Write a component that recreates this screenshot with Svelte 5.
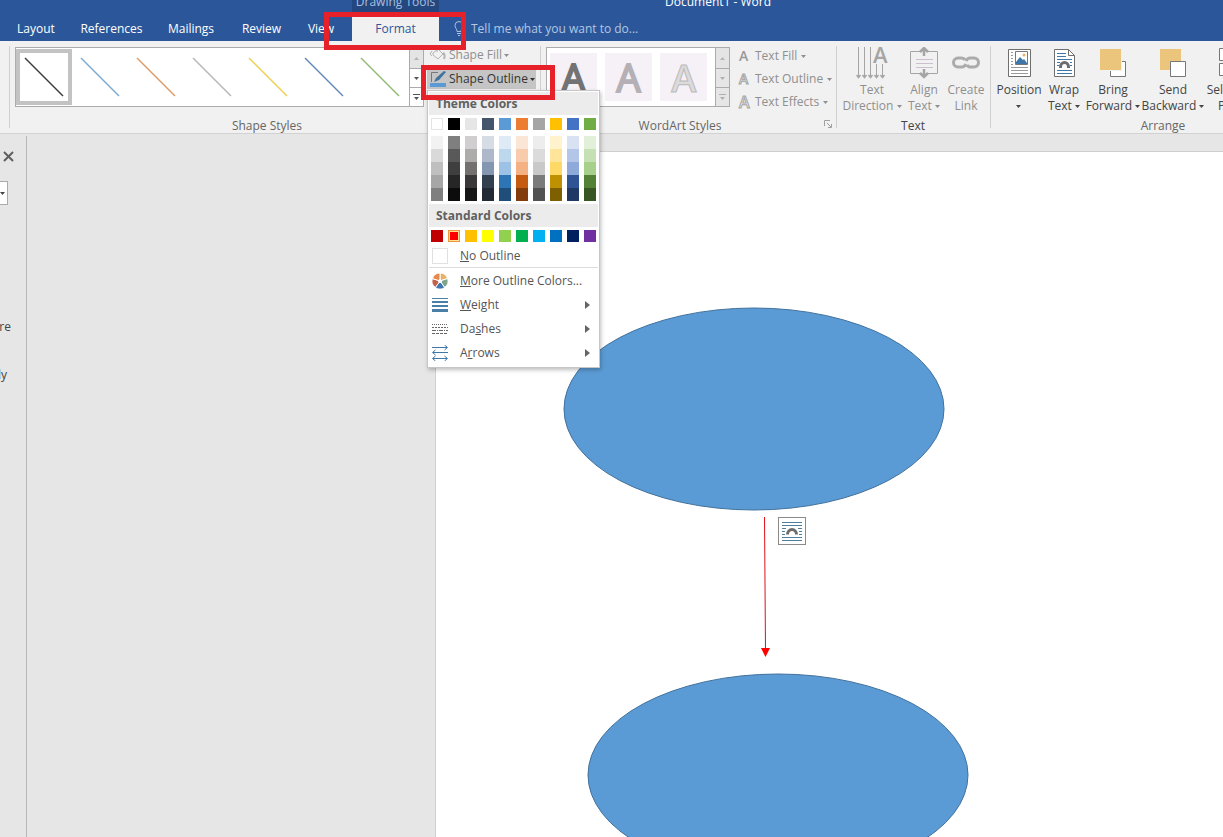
<script lang="ts">
  interface Palette {
    name: string;
    base: string;
    tints: string[];
  }

  const tabs = ['Layout', 'References', 'Mailings', 'Review', 'View'];

  const lineStyles = ['#3b3b3b', '#7ba9cf', '#dc9a66', '#b5b5b5', '#ecd04e', '#6288b5', '#8fbb74'];

  const theme: Palette[] = [
    { name: 'White', base: '#ffffff', tints: ['#f2f2f2', '#d9d9d9', '#bfbfbf', '#a6a6a6', '#7f7f7f'] },
    { name: 'Black', base: '#000000', tints: ['#7f7f7f', '#595959', '#3f3f3f', '#262626', '#0c0c0c'] },
    { name: 'Gray', base: '#e7e6e6', tints: ['#d0cece', '#aeabab', '#757070', '#3a3838', '#171616'] },
    { name: 'Blue-Gray', base: '#44546a', tints: ['#d6dce4', '#adb9ca', '#8496b0', '#323f4f', '#222a35'] },
    { name: 'Blue', base: '#5b9bd5', tints: ['#deebf6', '#bdd7ee', '#9cc3e5', '#2e75b5', '#1e4e79'] },
    { name: 'Orange', base: '#ed7d31', tints: ['#fbe5d5', '#f7cbac', '#f4b183', '#c55a11', '#833c0b'] },
    { name: 'Light Gray', base: '#a5a5a5', tints: ['#ededed', '#dbdbdb', '#c9c9c9', '#7b7b7b', '#525252'] },
    { name: 'Gold', base: '#ffc000', tints: ['#fff2cc', '#fee599', '#ffd965', '#bf9000', '#7f6000'] },
    { name: 'Royal Blue', base: '#4472c4', tints: ['#d9e2f3', '#b4c6e7', '#8eaadb', '#2f5496', '#1f3864'] },
    { name: 'Green', base: '#70ad47', tints: ['#e2efd9', '#c5e0b3', '#a8d08d', '#538135', '#375623'] },
  ];

  const standard = [
    '#c00000', '#ff0000', '#ffc000', '#ffff00', '#92d050',
    '#00b050', '#00b0f0', '#0070c0', '#002060', '#7030a0',
  ];

  let selectedColor = $state('#ff0000');
  let selectedLine = $state(0);
</script>

{#snippet caret()}
  <svg class="caret" viewBox="0 0 5 3" width="5" height="3" aria-hidden="true"><path d="M0 0h5L2.5 3z" fill="currentColor" /></svg>
{/snippet}

{#snippet scroller(off: boolean)}
  <div class="scroller" class:off>
    <button class="dim" aria-label="Scroll up"><svg width="5" height="3" viewBox="0 0 5 3"><path d="M0 3h5L2.5 0z" fill="currentColor" /></svg></button>
    <button aria-label="Scroll down">{@render caret()}</button>
    <button aria-label="More styles"><svg width="7" height="6" viewBox="0 0 7 6"><path d="M0 0h7v1H0zM1 3h5L3.5 6z" fill="currentColor" /></svg></button>
  </div>
{/snippet}

{#snippet wrapIcon()}
  <path d="M0 1.5h20M0 4.5h20M0 16.5h20M0 19.5h20M0 7.5h4M0 10.5h3M0 13.5h3M16 7.5h4M17 10.5h3M17 13.5h3" stroke="#4f7f9f" />
  <path d="M5.500 13.500a4.500 5 0 0 1 9 0" fill="none" stroke="#6d6d6d" stroke-width="3" />
{/snippet}

<div class="app">
  <header>
    <div class="context">Drawing Tools</div>
    <div class="doc-title">Document1 - Word</div>
    {#each tabs as tab, i}
      <button class="tab" style="grid-column: {i + 2}">{tab}</button>
    {/each}
    <button class="tab active">Format</button>
    <label class="tell">
      <svg width="10" height="15" viewBox="0 0 10 15" fill="none" stroke="#a9bfdf">
        <path d="M3 10.500C3 8 1 7 1 4.500a4 4 0 0 1 8 0C9 7 7 8 7 10.500zM3 12.500h4M4 14.500h2" />
      </svg>
      <input type="text" placeholder="Tell me what you want to do..." aria-label="Tell me what you want to do" />
    </label>
  </header>

  <section class="ribbon" aria-label="Format ribbon">
    <div class="group shape-styles">
      <div class="tools">
        <div class="gallery">
          {#each lineStyles as color, i}
            <button class="line-style" class:selected={selectedLine === i} aria-label="Line style {i + 1}" onclick={() => (selectedLine = i)}>
              <svg width="40" height="40" viewBox="0 0 40 40"><path d="M1 1l38 38" stroke={color} stroke-width="1.500" /></svg>
            </button>
          {/each}
          {@render scroller(false)}
        </div>
        <div class="options">
          <button class="option off">
            <svg width="18" height="16" viewBox="0 0 18 16" fill="none" stroke="#b4b4b4">
              <path d="M4 6l5-4 5 5-5 5-5-4zM8 5V1" /><path d="M14 6c2 1 2 3 1 6" stroke-width="2" /><path d="M3 4L1 7l2 2" />
            </svg>
            Shape Fill {@render caret()}
          </button>
          <div class="dropdown">
            <button class="option open" aria-expanded="true">
              <svg width="18" height="18" viewBox="0 0 18 18">
                <path d="M9 2.500H2.500V12" fill="none" stroke="#777" />
                <path d="M5 12l2-4 8-7 2 1-7 8z" fill="#41719c" />
                <path d="M1 13h16v4H1z" fill="#5b9bd5" />
              </svg>
              Shape Outline {@render caret()}
            </button>
            <div class="menu">
              <h3>Theme Colors</h3>
              <div class="swatches theme">
                {#each theme as color}
                  <button class="swatch" class:pale={color.base === '#ffffff'} aria-label={color.name} style="background: {color.base}"></button>
                {/each}
              </div>
              <div class="swatches tints">
                {#each theme as color}
                  <div class="tint-column">
                    {#each color.tints as tint, i}
                      <button class="tint" aria-label="{color.name} shade {i + 1}" style="background: {tint}"></button>
                    {/each}
                  </div>
                {/each}
              </div>
              <h3>Standard Colors</h3>
              <div class="swatches standard">
                {#each standard as color}
                  <button class="swatch" class:picked={selectedColor === color} aria-label={color} style="background: {color}" onclick={() => (selectedColor = color)}></button>
                {/each}
              </div>
              <button class="item none"><span class="empty"></span><span><u>N</u>o Outline</span></button>
              <button class="item">
                <svg width="16" height="16" viewBox="0 0 16 16" stroke="#fff">
                  <path d="M8 8L8 0A8 8 0 0 1 15.600 5.500z" fill="#e8b06a" />
                  <path d="M8 8L15.600 5.500A8 8 0 0 1 12.700 14.500z" fill="#7fa48b" />
                  <path d="M8 8L12.700 14.500A8 8 0 0 1 3.300 14.500z" fill="#3f78b0" />
                  <path d="M8 8L3.300 14.500A8 8 0 0 1 .4 5.500z" fill="#c4604a" />
                  <path d="M8 8L.4 5.500A8 8 0 0 1 8 0z" fill="#e58a4c" />
                  <circle cx="8" cy="8" r="1.500" fill="#fff" />
                </svg>
                <span><u>M</u>ore Outline Colors...</span>
              </button>
              <button class="item">
                <svg width="16" height="16" viewBox="0 0 16 16"><path d="M0 1h16v1H0zM0 4h16v2H0zM0 8h16v2H0zM0 12h16v3H0z" fill="#4a80a8" /></svg>
                <span><u>W</u>eight</span>
                <svg class="more" width="5" height="8" viewBox="0 0 5 8"><path d="M0 0l5 4-5 4z" fill="#666" /></svg>
              </button>
              <button class="item">
                <svg width="16" height="16" viewBox="0 0 16 16" stroke="#666">
                  <path d="M0 3.500h16" stroke-dasharray="1 1" /><path d="M0 6.500h16" stroke-dasharray="2 1" />
                  <path d="M0 9.500h16" stroke-dasharray="4 1 1 1" /><path d="M0 12.500h16" stroke-dasharray="3 1" />
                </svg>
                <span>Da<u>s</u>hes</span>
                <svg class="more" width="5" height="8" viewBox="0 0 5 8"><path d="M0 0l5 4-5 4z" fill="#666" /></svg>
              </button>
              <button class="item">
                <svg width="16" height="16" viewBox="0 0 16 16" fill="none" stroke="#3f78a8">
                  <path d="M0 2.500h15M12.500 0l3 2.500-3 2.500M1 7.500h15M3.500 5l-3 2.500 3 2.500M1 13.500h14M3.500 11l-3 2.500 3 2.500M12.500 11l3 2.500-3 2.500" />
                </svg>
                <span>A<u>r</u>rows</span>
                <svg class="more" width="5" height="8" viewBox="0 0 5 8"><path d="M0 0l5 4-5 4z" fill="#666" /></svg>
              </button>
            </div>
          </div>
        </div>
      </div>
      <div class="group-label">Shape Styles</div>
    </div>

    <div class="group wordart">
      <div class="tools">
        <div class="gallery">
          <button class="art dark">A</button>
          <button class="art mid">A</button>
          <button class="art outlined">A</button>
          {@render scroller(true)}
        </div>
        <div class="options text-options">
          <button class="option off"><b class="glyph">A</b> Text Fill {@render caret()}</button>
          <button class="option off"><b class="glyph hollow">A</b> Text Outline {@render caret()}</button>
          <button class="option off"><b class="glyph hollow large">A</b> Text Effects {@render caret()}</button>
        </div>
      </div>
      <div class="group-label">WordArt Styles</div>
      <button class="launcher" aria-label="WordArt settings">
        <svg width="8" height="8" viewBox="0 0 8 8" fill="none" stroke="#a0a0a0"><path d="M.5 6V.5H6M3 3l4 4M7.500 4v3.500H4" /></svg>
      </button>
    </div>

    <div class="group text-group">
      <div class="tools">
        <button class="big off">
          <svg width="32" height="32" viewBox="0 0 32 32" fill="none" stroke="#a5a5a5">
            <path d="M2.500 0v30M8.500 0v30M14.500 0v30M20.500 17v13M26.500 17v13" />
            <path d="M.5 28l2 2.500 2-2.500M6.500 28l2 2.500 2-2.500M12.500 28l2 2.500 2-2.500M18.500 28l2 2.500 2-2.500M24.500 28l2 2.500 2-2.500" stroke-width="1.500" />
            <text class="icon-letter" x="17" y="16">A</text>
          </svg>
          <span>Text<br />Direction {@render caret()}</span>
        </button>
        <button class="big off">
          <svg width="32" height="32" viewBox="0 0 32 32" fill="none" stroke="#a5a5a5">
            <path d="M12 4.500H2.500v22H12M20 4.500h9.500v22H20" />
            <path d="M8 12.500h17M8 16.500h17M8 20.500h17" stroke="#cbbfd0" />
            <path d="M16 2v7M12 5l4-4 4 4M16 22v7M12 26l4 4 4-4" stroke-width="2.500" />
          </svg>
          <span>Align<br />Text {@render caret()}</span>
        </button>
        <button class="big off">
          <svg width="32" height="32" viewBox="0 0 32 32" fill="none" stroke="#ababab" stroke-width="3">
            <path d="M15 13c-1-2-2-2-4-2H8a4.500 4.500 0 0 0 0 9h4c2 0 3-1 4-3" />
            <path d="M17 18c1 2 2 2 4 2h3a4.500 4.500 0 0 0 0-9h-4c-2 0-3 1-4 3" />
          </svg>
          <span>Create<br />Link</span>
        </button>
      </div>
      <div class="group-label strong">Text</div>
    </div>

    <div class="group arrange">
      <div class="tools">
        <button class="big">
          <svg width="32" height="32" viewBox="0 0 32 32">
            <path d="M5.500 2.500h22v27h-22z" fill="#fff" stroke="#6f6f6f" />
            <path d="M8 5.500h2M8 8.500h2M8 11.500h2M8 14.500h2M8 17.500h2M8 20.500h17M8 23.500h17M8 26.500h17" stroke="#999" />
            <path d="M12.500 4.500h12v13h-12z" fill="#fff" stroke="#777" />
            <path d="M13 15l4-5 3 3 1-1 3 4v1H13z" fill="#3f78a8" /><circle cx="21" cy="8" r="1.500" fill="#e8b06a" />
          </svg>
          <span>Position<br />{@render caret()}</span>
        </button>
        <button class="big">
          <svg width="32" height="32" viewBox="0 0 32 32">
            <path d="M6.500 2.500h14l6 6v21h-20z" fill="#fff" stroke="#6f6f6f" /><path d="M20.500 2.500v6h6" fill="none" stroke="#6f6f6f" />
            <path d="M9 6.500h9M9 9.500h9M9 12.500h15M9 15.500h3M9 18.500h2M22 15.500h2M22 18.500h2M9 23.500h15M9 26.500h15" stroke="#3f78a8" />
            <path d="M12.500 21v-1a4 4.500 0 0 1 8 0v1" fill="none" stroke="#6d6d6d" stroke-width="3" />
          </svg>
          <span>Wrap<br />Text {@render caret()}</span>
        </button>
        <button class="big">
          <svg width="32" height="32" viewBox="0 0 32 32">
            <path d="M13.500 14.500h15v15h-15z" fill="#fff" stroke="#777" /><path d="M2 1h23v23H2z" fill="#f1f1f1" /><path d="M3 2h21v21H3z" fill="#eac57b" />
          </svg>
          <span>Bring<br />Forward {@render caret()}</span>
        </button>
        <button class="big">
          <svg width="32" height="32" viewBox="0 0 32 32">
            <path d="M3 2h21v21H3z" fill="#eac57b" /><path d="M13.500 14.500h15v15h-15z" fill="#fff" stroke="#777" />
          </svg>
          <span>Send<br />Backward {@render caret()}</span>
        </button>
        <button class="big">
          <svg width="32" height="32" viewBox="0 0 32 32" fill="#fff" stroke="#777"><path d="M3.500 1.500h18v12h-18zM3.500 16.500h18v12h-18z" /></svg>
          <span>Selection<br />Pane</span>
        </button>
      </div>
      <div class="group-label">Arrange</div>
    </div>
  </section>

  <main>
    <aside>
      <button class="close" aria-label="Close pane">
        <svg width="11" height="11" viewBox="0 0 11 11"><path d="M1 1l9 9M10 1l-9 9" stroke="#5f5f5f" stroke-width="2" /></svg>
      </button>
      <button class="combo" aria-label="Search options">{@render caret()}</button>
      <p class="first">are</p>
      <p>ly</p>
    </aside>
    <div class="page">
      <svg class="drawing" width="787" height="685" viewBox="0 0 787 685" role="img" aria-label="Two ellipses joined by an arrow">
        <ellipse cx="318" cy="257" rx="190" ry="101" fill="#5b9bd5" stroke="#41719c" />
        <ellipse cx="342" cy="623" rx="190" ry="101" fill="#5b9bd5" stroke="#41719c" />
        <path d="M328.500 365l1 134" stroke="#e01018" />
        <path d="M325 496h9l-4.500 9z" fill="#ff0000" />
      </svg>
      <button class="layout-options" aria-label="Layout options">
        <svg width="20" height="21" viewBox="0 0 20 21">{@render wrapIcon()}</svg>
      </button>
    </div>
  </main>

  <div class="highlight tab-highlight"></div>
  <div class="highlight outline-highlight"></div>
</div>

<style>
  :global(body) {
    overflow: hidden;
  }

  .app {
    position: relative;
    display: flex;
    flex-direction: column;
    height: 100vh;
    overflow: hidden;
    background: #e6e6e6;
    color: #444;
    font: 12px/16px "Open Sans", "Noto Sans", sans-serif;
  }

  button {
    margin: 0;
    padding: 0;
    border: 0;
    background: none;
    color: inherit;
    font: inherit;
    white-space: nowrap;
  }

  svg {
    flex: none;
    display: block;
  }

  .caret {
    display: inline-block;
    vertical-align: middle;
  }

  header {
    display: grid;
    grid-template-columns: 3px 66px 85px 74px 67px 52px 5px 87px 1fr;
    grid-template-rows: 13px 28px;
    flex: none;
    overflow: hidden;
    background: #2b579a;
    color: #fff;
  }

  .context {
    grid-area: 1 / 8;
    display: flex;
    align-items: flex-end;
    justify-content: center;
    height: 13px;
    padding-bottom: 3px;
    box-sizing: border-box;
    background: #24477f;
    color: #a9bfdf;
    white-space: nowrap;
  }

  .doc-title {
    grid-area: 1 / 9;
    display: flex;
    align-items: flex-end;
    height: 10px;
    padding-left: 226px;
  }

  .tab {
    grid-row: 2;
    padding-top: 3px;
  }

  .tab.active {
    grid-column: 8;
    background: #f1f1f1;
    color: #2b579a;
  }

  .tell {
    grid-area: 2 / 9;
    display: flex;
    align-items: center;
    gap: 7px;
    padding: 3px 0 0 15px;
  }

  .tell input {
    width: 240px;
    padding: 0;
    border: 0;
    outline: 0;
    background: none;
    color: #fff;
    font: inherit;
  }

  .tell input::placeholder {
    color: #b3c6e2;
    opacity: 1;
  }

  .ribbon {
    display: flex;
    flex: none;
    height: 92px;
    padding-left: 9px;
    border-bottom: 1px solid #d2d2d2;
    background: #f1f1f1;
  }

  .group {
    position: relative;
    flex: none;
    box-sizing: border-box;
    height: 82px;
    margin-top: 5px;
    padding: 1px 0 0 5px;
    border-left: 1px solid #d0d0d0;
  }

  .shape-styles {
    width: 531px;
  }

  .wordart {
    width: 296px;
  }

  .text-group {
    width: 154px;
    padding-left: 4px;
  }

  .arrange {
    width: 342px;
    padding-left: 3px;
  }

  .tools {
    display: flex;
    height: 70px;
  }

  .group-label {
    height: 16px;
    color: #666;
    line-height: 18px;
    text-align: center;
  }

  .shape-styles .group-label {
    width: 504px;
  }

  .wordart .group-label {
    width: 268px;
  }

  .text-group .group-label {
    width: 144px;
  }

  .strong {
    color: #444;
  }

  .gallery {
    display: flex;
    box-sizing: border-box;
    height: 60px;
    border: 1px solid #ababab;
    background: #fff;
  }

  .line-style {
    display: grid;
    place-items: center;
    box-sizing: border-box;
    width: 56px;
    height: 56px;
    margin-top: 1px;
    border: 4px solid transparent;
  }

  .line-style.selected {
    border-color: #c3c3c3;
  }

  .scroller {
    display: grid;
    grid-template-rows: 20px 19px 19px;
    width: 13px;
    margin-left: auto;
    border-left: 1px solid #ababab;
    color: #555;
  }

  .scroller button {
    display: grid;
    place-items: center;
  }

  .scroller button + button {
    border-top: 1px solid #ababab;
  }

  .scroller .dim {
    background: #e4e4e4;
    color: #b5b5b5;
  }

  .scroller.off {
    background: #e6e6e6;
    color: #b0b0b0;
  }

  .shape-styles .gallery {
    width: 409px;
  }

  .options {
    display: flex;
    flex-direction: column;
    padding-left: 3px;
  }

  .option {
    display: flex;
    align-items: center;
    gap: 4px;
    height: 20px;
    margin-bottom: 3px;
    padding: 0 4px 2px 2px;
    color: #444;
  }

  .option.off,
  .big.off {
    color: #8f8f8f;
  }

  .option.open {
    width: 109px;
    padding-bottom: 0;
    background: #c5c5c5;
    color: #333;
  }

  .shape-styles .option {
    gap: 2px;
  }

  .shape-styles .options {
    margin-top: -1px;
  }

  .dropdown {
    position: relative;
  }

  .menu {
    position: absolute;
    z-index: 2;
    top: 21px;
    left: 0;
    box-sizing: border-box;
    width: 173px;
    padding: 1px 1px 2px;
    border: 1px solid #c6c6c6;
    background: #fff;
    box-shadow: 1px 2px 4px rgba(0, 0, 0, 0.25);
    color: #555;
  }

  .menu h3 {
    margin: 0;
    padding: 0 7px;
    background: #ececec;
    color: #606060;
    font-size: 12px;
    line-height: 23px;
  }

  .swatches {
    display: grid;
    grid-template-columns: repeat(10, 12px);
    gap: 5px;
    padding-left: 2px;
  }

  .swatches.theme {
    padding-top: 3px;
    padding-bottom: 6px;
  }

  .swatches.tints {
    padding-bottom: 3px;
  }

  .swatches.standard {
    padding-top: 3px;
    padding-bottom: 2px;
  }

  .swatch {
    height: 12px;
  }

  .pale {
    border: 1px solid #e4e4e4;
  }

  .picked {
    border: 1px solid #f29436;
    box-shadow: inset 0 0 0 1px #ffe294;
  }

  .tint-column {
    display: flex;
    flex-direction: column;
  }

  .tint {
    height: 13px;
  }

  .item {
    display: flex;
    align-items: center;
    width: 100%;
    height: 24px;
    padding-left: 3px;
    gap: 12px;
    text-align: left;
  }

  .item.none {
    margin-bottom: 1px;
    border-bottom: 1px solid #dcdcdc;
  }

  .empty {
    box-sizing: border-box;
    width: 16px;
    height: 16px;
    border: 1px solid #e0e0e0;
  }

  .more {
    margin-left: auto;
    margin-right: 8px;
  }

  .wordart .gallery {
    gap: 8px;
    width: 184px;
    padding-left: 3px;
  }

  .art {
    width: 48px;
    height: 48px;
    margin-top: 5px;
    background: #f5f1f6;
    font-size: 38px;
    line-height: 48px;
    -webkit-text-stroke: 2px currentColor;
  }

  .art.dark {
    color: #737373;
  }

  .art.mid {
    color: #b4b0b6;
  }

  .art.outlined {
    color: #dcdadd;
    font-weight: 600;
    -webkit-text-stroke: 1px #bbb;
  }

  .text-options {
    padding-left: 7px;
  }

  .glyph {
    width: 12px;
    color: #999;
    font-size: 14px;
    font-weight: 600;
    text-align: left;
  }

  .glyph.hollow {
    color: #f1f1f1;
    -webkit-text-stroke: 1px #a5a5a5;
  }

  .glyph.large {
    font-size: 16px;
  }

  .launcher {
    position: absolute;
    right: 4px;
    bottom: 0;
  }

  .big {
    display: flex;
    flex-direction: column;
    align-items: center;
    gap: 3px;
    flex: none;
    color: #444;
  }

  .text-group .tools {
    display: grid;
    grid-template-columns: 62px 42px 42px;
  }

  .arrange .tools {
    display: grid;
    grid-template-columns: 50px 40px 58px 62px 56px;
  }

  .icon-letter {
    fill: #a5a5a5;
    stroke: none;
    font-size: 22px;
    font-weight: 600;
  }

  main {
    display: flex;
    flex: 1;
    min-height: 0;
  }

  aside {
    flex: none;
    box-sizing: border-box;
    width: 27px;
    margin-top: 2px;
    border-right: 1px solid #b8b8b8;
    overflow: hidden;
  }

  .close {
    display: block;
    margin: 15px 0 0 3px;
  }

  .combo {
    display: flex;
    align-items: center;
    width: 8px;
    height: 24px;
    margin-top: 19px;
    border: 1px solid #ababab;
    border-left: 0;
    background: #fff;
    overflow: hidden;
  }

  aside p {
    display: flex;
    justify-content: flex-end;
    width: 7px;
    margin: 32px 0 0;
  }

  aside .first {
    width: 11px;
    margin-top: 114px;
  }

  .page {
    position: relative;
    flex: 1;
    min-width: 0;
    margin: 17px 0 0 408px;
    border: 1px solid #cfcfcf;
    border-width: 1px 0 0 1px;
    background: #fff;
    overflow: hidden;
  }

  .layout-options {
    position: absolute;
    top: 365px;
    left: 342px;
    display: grid;
    place-items: center;
    box-sizing: border-box;
    width: 28px;
    height: 28px;
    border: 1px solid #8a8a8a;
    background: #fff;
  }

  .highlight {
    position: absolute;
    z-index: 3;
    box-sizing: border-box;
    border: 5px solid #e6212a;
    pointer-events: none;
  }

  .tab-highlight {
    top: 12px;
    left: 324px;
    width: 142px;
    height: 38px;
  }

  .outline-highlight {
    top: 65px;
    left: 421px;
    width: 134px;
    height: 35px;
  }
</style>
